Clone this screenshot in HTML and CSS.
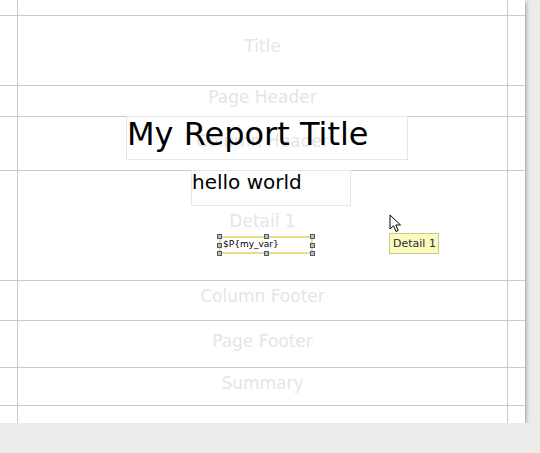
FILE: index.html
```html
<!DOCTYPE html>
<html lang="en">
<head>
  <meta charset="UTF-8">
  <title>Report Designer</title>
  <link rel="stylesheet" href="styles.css">
</head>
<body>

  <div class="page">
    <div class="band margin-top"></div>

    <div class="band title-band"><span class="band-label">Title</span></div>

    <div class="band page-header"><span class="band-label">Page Header</span></div>

    <div class="band column-header">
      <span class="band-label">Column Header</span>
      <div class="field title-field">My Report Title</div>
    </div>

    <div class="band detail">
      <span class="band-label">Detail 1</span>
      <div class="field hello-field">hello world</div>

      <div class="field var-field selected">
        $P{my_var}
        <span class="handle h-tl"></span>
        <span class="handle h-tm"></span>
        <span class="handle h-tr"></span>
        <span class="handle h-ml"></span>
        <span class="handle h-mr"></span>
        <span class="handle h-bl"></span>
        <span class="handle h-bm"></span>
        <span class="handle h-br"></span>
      </div>

      <!-- mouse pointer + hover tooltip -->
      <svg class="cursor" width="13" height="20" viewBox="0 0 13 20">
        <path d="M1 1 L1 15 L4.5 11.8 L7 17.5 L9.2 16.5 L6.8 11 L11.5 11 Z" fill="#fff" stroke="#000" stroke-width="1" stroke-linejoin="round"/>
      </svg>
      <div class="tooltip">Detail 1</div>
    </div>

    <div class="band column-footer"><span class="band-label">Column Footer</span></div>

    <div class="band page-footer"><span class="band-label">Page Footer</span></div>

    <div class="band summary"><span class="band-label">Summary</span></div>

    <div class="band margin-bottom"></div>

    <div class="margin-line left"></div>
    <div class="margin-line right"></div>
  </div>

</body>
</html>
```

FILE: styles.css
```css
body { margin: 0; background: #ebebea; font-family: "DejaVu Sans", Verdana, sans-serif; }

.page { position: relative; width: 525px; height: 423px; background: #fff; box-shadow: 1px 2px 4px rgba(0, 0, 0, 0.35); }

.band { position: relative; box-sizing: border-box; border-bottom: 1px solid #c9c9d3; display: flex; align-items: center; justify-content: center; padding: 0 18px 5px 18px; }
.margin-top { height: 16px; }
.title-band { height: 70px; padding-bottom: 9px; }
.page-header { height: 31px; padding-bottom: 8px; }
.column-header { height: 54px; }
.detail { height: 110px; padding-bottom: 9px; }
.column-footer { height: 40px; padding-bottom: 9px; }
.page-footer { height: 47px; padding-bottom: 6px; }
.summary { height: 38px; padding-bottom: 7px; }
.margin-bottom { height: 18px; border-bottom: none; }

.band-label { font-size: 17px; color: #e5e5e5; }

.margin-line { position: absolute; top: 0; bottom: 0; width: 1px; background: #c9c9d3; }
.margin-line.left { left: 17px; }
.margin-line.right { left: 507px; }

.field { position: absolute; box-sizing: border-box; border: 1px solid #e6e6e6; color: #000; white-space: nowrap; }
.title-field { left: 126px; top: -1px; width: 282px; height: 44px; font-size: 32px; line-height: 35px; }
.hello-field { left: 191px; top: -1px; width: 160px; height: 36px; font-size: 20px; line-height: 22px; }

.var-field { left: 219px; top: 65px; width: 94px; height: 18px; font-size: 9px; line-height: 10px; padding: 1px 0 0 2px; }
.selected { border: 2px solid #ebdc8c; }

.handle { position: absolute; width: 3px; height: 3px; background: #b8bcc4; border: 1px solid #555a63; }
.h-tl { left: -4px; top: -4px; }
.h-tm { left: 43px; top: -4px; }
.h-tr { right: -4px; top: -4px; }
.h-ml { left: -4px; top: 5px; }
.h-mr { right: -4px; top: 5px; }
.h-bl { left: -4px; bottom: -4px; }
.h-bm { left: 43px; bottom: -4px; }
.h-br { right: -4px; bottom: -4px; }

.cursor { position: absolute; left: 389px; top: 43px; }

.tooltip { position: absolute; left: 389px; top: 62px; box-sizing: border-box; width: 50px; height: 21px; background: #fbfbbd; border: 1px solid #c9c98e; font-size: 11px; color: #2b2b2b; line-height: 19px; padding: 0 0 0 3px; white-space: nowrap; }
```
